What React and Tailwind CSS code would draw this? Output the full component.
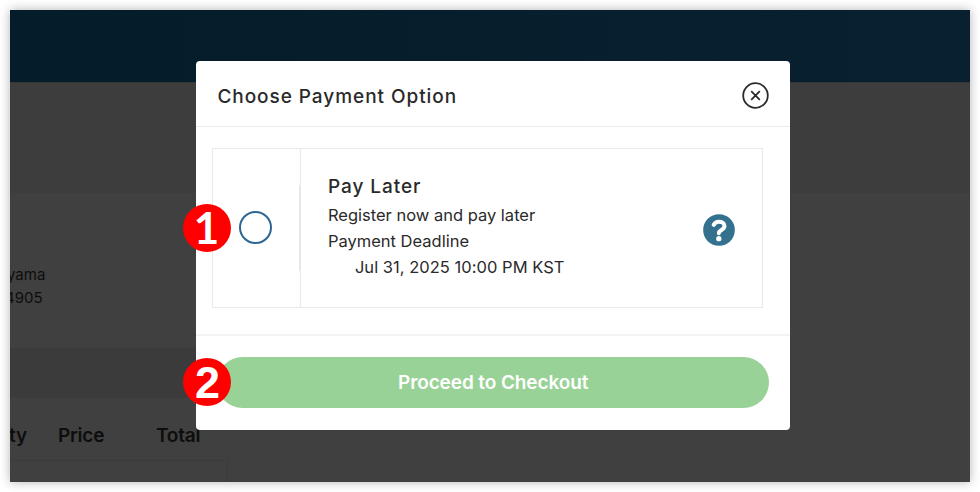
function StepBadge({ number, className }) {
  return (
    <span
      className={`absolute flex size-12 items-center justify-center rounded-full bg-[#ff0000] leading-none font-bold text-white ${className}`}
    >
      {number}
    </span>
  );
}

function HelpIcon() {
  return (
    <svg className="mt-[65px] mr-[27.5px] size-8" viewBox="0 0 96 96" fill="none">
      <circle cx="48" cy="48" r="47.5" fill="#33718f" />
      <path
        d="M32 32.5C36 26 41 23.5 47.5 23.5C57.5 23.5 64.5 28 64.5 36C64.5 43 59 46 53.5 49.5C49.5 52 47.5 53.5 47.5 58"
        stroke="#fff"
        strokeWidth="12"
        strokeLinecap="round"
      />
      <circle cx="47.5" cy="74" r="8" fill="#fff" />
    </svg>
  );
}

function CheckoutPage() {
  return (
    <div className="flex h-full flex-col overflow-hidden text-[#0d0d0d]">
      <header className="h-[72px] shrink-0 bg-linear-to-r from-[#051c2a] to-[#082030]" />
      <div className="h-[111px] shrink-0 border-t border-[#363636] bg-[#3d3d3d]" />
      <section className="h-[155px] shrink-0 pt-[70px] text-[15px] leading-[23px]">
        <div className="-ml-[3px]">yama</div>
        <div className="-ml-[5px]">4905</div>
      </section>
      <div className="h-[50px] w-[217px] shrink-0 bg-[#3b3b3b]" />
      <div className="flex h-[62px] shrink-0 pt-[25px] text-[19px] leading-[26px] font-semibold tracking-[-0.2px]">
        <span className="-ml-px w-[49px]">ty</span>
        <span className="w-[98px]">Price</span>
        <span>Total</span>
      </div>
      <div className="h-[22px] w-[218px] shrink-0 border-t border-r border-[#3b3b3b]" />
    </div>
  );
}

function PaymentOption() {
  return (
    <div className="mx-4 mt-[21px] flex h-[160px] w-[551px] border border-[#e8e9eb]">
      <div className="flex w-[88px] items-center justify-between border-r border-[#e8e9eb] pl-[26px]">
        <button
          aria-label="Pay Later"
          className="mb-px size-[33px] rounded-full border-2 border-[#2d6693]"
        />
        <span className="h-[86px] w-px bg-[#e8e8e8]" />
      </div>
      <div className="flex-1 pt-[25px] pl-[26.5px] text-[16.5px] leading-[26px]">
        <h3 className="text-[19px] font-medium tracking-[0.95px]">Pay Later</h3>
        <p className="mt-[2px]">Register now and pay later</p>
        <p>Payment Deadline</p>
        <p className="pl-[27px] tracking-[0.03px]">Jul 31, 2025 10:00 PM KST</p>
      </div>
      <HelpIcon />
    </div>
  );
}

export default function App() {
  return (
    <div className="h-[492px] w-[980px] overflow-hidden bg-white p-[10px] font-[Inter,sans-serif] text-[#2a2a2a]">
      <div className="relative h-[472px] w-[960px] bg-[#404040] shadow-[0_0_10px_rgba(0,0,0,0.3)]">
        <CheckoutPage />
        <div
          role="dialog"
          className="absolute top-[51px] left-[186.4px] h-[368.6px] w-[593.6px] rounded-[4px] bg-white"
        >
          <div className="flex h-[66px] items-center justify-between border-b border-[#e9ebec] pr-[21px] pl-[21px]">
            <h2 className="pt-[8px] text-[19px] font-medium tracking-[0.95px]">
              Choose Payment Option
            </h2>
            <button aria-label="Close" className="mt-[4px]">
              <svg
                className="size-[27px]"
                viewBox="0 0 27 27"
                fill="none"
                stroke="#2b2b2b"
                strokeWidth="1.8"
              >
                <circle cx="13.5" cy="13.5" r="12.3" />
                <path d="M9.2 9.2l8.6 8.6M17.8 9.2l-8.6 8.6" />
              </svg>
            </button>
          </div>
          <PaymentOption />
          <div className="mt-[26px] border-t-2 border-[#f3f3f3] px-[21px] pt-[21px]">
            <button className="h-[51px] w-full rounded-full bg-[#99d297] pt-[2px] text-[19px] font-semibold tracking-[-0.1px] text-white">
              Proceed to Checkout
            </button>
          </div>
          <StepBadge
            number={1}
            className="top-[143px] -left-[13px] pr-[2px] pb-[2px] font-['Lato'] text-[44px]"
          />
          <StepBadge
            number={2}
            className="top-[297px] -left-[13px] font-['Liberation_Sans'] text-[45px]"
          />
        </div>
      </div>
    </div>
  );
}
